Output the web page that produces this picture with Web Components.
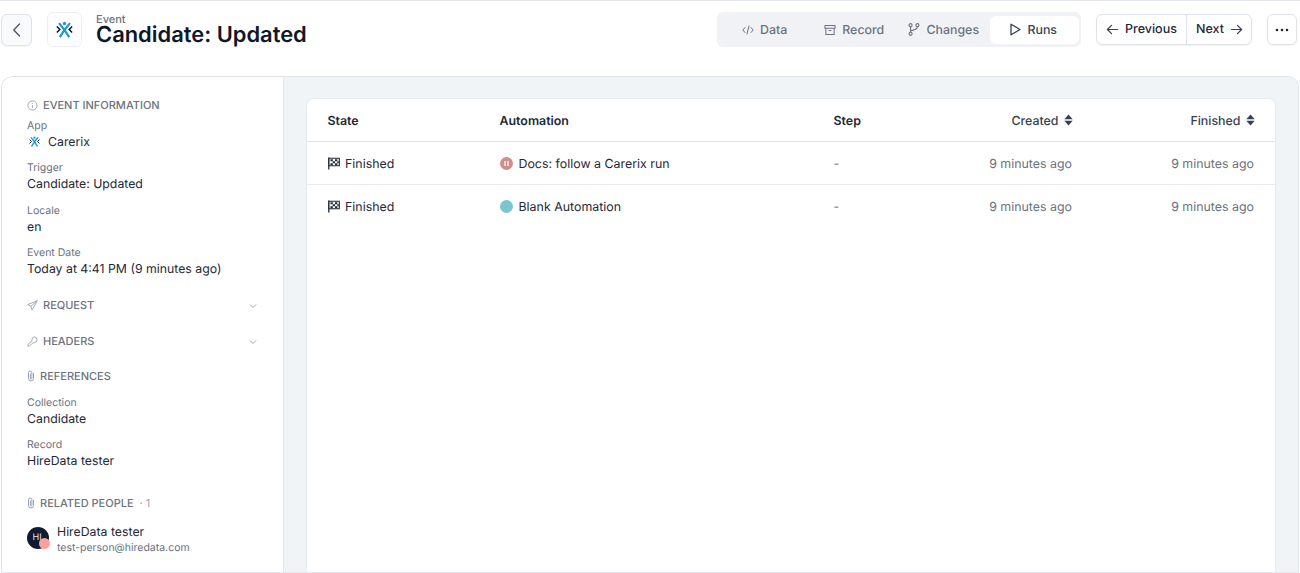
<!DOCTYPE html>
<html><head><meta charset="utf-8"><style>
html,body{margin:0;padding:0;height:573px;overflow:hidden;background:#fff;font-family:Inter,"Liberation Sans",sans-serif;color:#111827;text-rendering:geometricPrecision}
</style></head><body>
<app-page></app-page>
<script>
const I={
 back:'<svg width="16" height="16" viewBox="0 0 16 16" fill="none" stroke="#4b5563" stroke-width="1.3" stroke-linecap="round" stroke-linejoin="round"><path d="M10.500 2 4.800 8l5.700 6"/></svg>',
 logo:s=>`<svg width="${s}" height="${s}" viewBox="0 0 20 20" fill="none"><path d="M3.500 2.500 10 10.500 16.500 2.500M10 10.500 4.500 19M10 10.500 15.500 19" stroke="#1a9ad6" stroke-width="2.600"/><circle cx="10" cy="3" r="2" fill="#1a9ad6"/><path d="M1 6.500 4.500 10 1 13.500M19 6.500 15.500 10 19 13.500" stroke="#111827" stroke-width="1.800"/></svg>`,
 code:'<svg width="12" height="12" viewBox="0 0 12 12" fill="none" stroke="#6b7280" stroke-width="1" stroke-linecap="round" stroke-linejoin="round"><path d="M3 3.500.8 6 3 8.500M9 3.500 11.200 6 9 8.500M7 2 5 10"/></svg>',
 box:'<svg width="12" height="12" viewBox="0 0 13 13" fill="none" stroke="#6b7280" stroke-width="1.100" stroke-linejoin="round"><rect x="1" y="1.500" width="11" height="3"/><path d="M2 4.500v7h9v-7M5 7h3"/></svg>',
 branch:'<svg width="12" height="15" viewBox="0 0 14 16" fill="none" stroke="#6b7280" stroke-width="1.300"><circle cx="3" cy="3" r="1.800"/><circle cx="3" cy="13" r="1.800"/><circle cx="11" cy="3" r="1.800"/><path d="M3 4.800v6.400M11 4.800c0 3-3 3.800-8 4.800"/></svg>',
 play:'<svg width="12" height="13" viewBox="0 0 12 13" fill="none" stroke="#374151" stroke-width="1.300" stroke-linejoin="round"><path d="M2 1.200 11 6.500 2 11.800z"/></svg>',
 left:'<svg width="13" height="13" viewBox="0 0 14 14" fill="none" stroke="#374151" stroke-width="1.300" stroke-linecap="round" stroke-linejoin="round"><path d="M12.500 7h-11M6 2.500 1.500 7 6 11.500"/></svg>',
 right:'<svg width="13" height="13" viewBox="0 0 14 14" fill="none" stroke="#374151" stroke-width="1.300" stroke-linecap="round" stroke-linejoin="round"><path d="M1.500 7h11M8 2.500 12.500 7 8 11.500"/></svg>',
 dots:'<svg width="14" height="4" viewBox="0 0 14 4" fill="#1f2937"><circle cx="2" cy="2" r="1.300"/><circle cx="7" cy="2" r="1.300"/><circle cx="12" cy="2" r="1.300"/></svg>',
 info:'<svg width="11" height="11" viewBox="0 0 12 12" fill="none" stroke="#9ca3af" stroke-width="1"><circle cx="6" cy="6" r="5"/><path d="M6 5.500v3M6 3.300v.8"/></svg>',
 send:'<svg width="11" height="11" viewBox="0 0 12 12" fill="none" stroke="#9ca3af" stroke-width="1" stroke-linejoin="round"><path d="M11.200 .8.800 5l3.400 1.800L5.500 11z"/><path d="M11.200 .8 4.200 6.800"/></svg>',
 key:'<svg width="11" height="11" viewBox="0 0 12 12" fill="none" stroke="#9ca3af" stroke-width="1" stroke-linejoin="round"><path d="M7.800 1a3.200 3.200 0 0 1 0 6.400l-1-.1L2.500 11H1V9.500l4.500-4.300-.1-1A3 3 0 0 1 7.800 1z"/></svg>',
 clip:'<svg width="8" height="12" viewBox="0 0 8 12" fill="none" stroke="#9ca3af" stroke-width="1"><path d="M6.500 3v5.500a2.500 2.500 0 0 1-5 0V2.700a1.700 1.700 0 0 1 3.400 0v5.600a.8.800 0 0 1-1.600 0V3.500"/></svg>',
 chev:'<svg width="8" height="6" viewBox="0 0 8 6" fill="none" stroke="#9ca3af" stroke-width="1" style="margin-top:2px"><path d="M1 1.500 4 4.500 7 1.500"/></svg>',
 flag:'<svg width="12" height="13" viewBox="0 0 12 13" fill="none"><path d="M.8 .5v12" stroke="#1f2937" stroke-width="1.300"/><path d="M1 1.200h10.300v7.600H1z" stroke="#1f2937" stroke-width="1.100" fill="#fff"/><path d="M2.500 2.300h2.300v2H2.500zM7 2.300h2.300v2H7zM4.800 4.300H7v2H4.800zM9.300 4.300h1.500v2H9.300zM2.500 6.300h2.300v2H2.500zM7 6.300h2.300v2H7z" fill="#1f2937"/></svg>',
 sort:'<svg width="9" height="12" viewBox="0 0 9 12" fill="#374151"><path d="M4.500 .5 8.700 5.200H.3zM4.500 11.500 .3 6.800h8.400z"/></svg>',
 pause:'<svg width="13" height="13" viewBox="0 0 13 13"><circle cx="6.500" cy="6.500" r="6.500" fill="#cf8f8c"/><rect x="4.300" y="4" width="1.500" height="5" fill="#fff" opacity=".85"/><rect x="7.200" y="4" width="1.500" height="5" fill="#fff" opacity=".85"/></svg>',
 dot:'<svg width="13" height="13" viewBox="0 0 13 13"><circle cx="6.500" cy="6.500" r="6.500" fill="#7cc5cf"/></svg>'
};
function def(n,css,html){
 customElements.define(n,class extends HTMLElement{
  connectedCallback(){ if(this.shadowRoot)return;
   const r=this.attachShadow({mode:'open'});
   r.innerHTML='<style>'+css+'</style>'+(typeof html==='function'?html(this):html);
  }
 });
}
def('seg-tab',`:host{display:flex;align-items:center;justify-content:center;gap:6px;height:28px;font-size:12.400px;font-weight:500;color:#6b7280;box-sizing:border-box;padding-right:2px}
:host([active]){background:#fff;border-radius:6px;color:#374151}`,e=>`${I[e.getAttribute('icon')]}<slot></slot>`);
def('nav-btn',`:host{display:flex;align-items:center;justify-content:center;gap:6px;height:100%;box-sizing:border-box;font-size:12.500px;font-weight:500;color:#1f2937}`,e=>{const ic=I[e.getAttribute('icon')];return e.hasAttribute('after')?`<slot></slot>${ic}`:`${ic}<slot></slot>`});
def('top-bar',`:host{display:flex;align-items:center;height:76px;box-sizing:border-box;border-top:1px solid #e5e7eb;padding:0 3px 18px 1px}
.back{width:31px;height:32px;box-sizing:border-box;border:1px solid #dfe2e8;border-radius:6px;background:#f8fafc;display:flex;align-items:center;justify-content:center;margin-right:15px;box-shadow:0 1px 1px rgba(0,0,0,.04)}
.logo{width:35px;height:35px;box-sizing:border-box;border:1px solid #eceef2;border-radius:6px;display:flex;align-items:center;justify-content:center;margin-right:14px}
.tt{display:flex;flex-direction:column;flex:1}
.ev{font-size:11px;line-height:11px;color:#6b7280;font-weight:500}
h1{margin:0;font-size:21.900px;line-height:21px;font-weight:600;color:#0f172a}
.seg{display:grid;grid-template-columns:repeat(4,89.500px);align-items:center;width:364px;height:35px;box-sizing:border-box;background:#f1f2f5;border-radius:6px;padding:0 2px 0 4px;margin-right:15px}
.seg2{display:grid;grid-template-columns:89px 66px;width:156px;height:31px;box-sizing:border-box;border:1px solid #dfe2e8;border-radius:6px;box-shadow:0 1px 1px rgba(0,0,0,.05);margin-right:15px}
.seg2 nav-btn+nav-btn{border-left:1px solid #dfe2e8}
.more{width:30px;height:31px;box-sizing:border-box;border:1px solid #dfe2e8;border-radius:6px;display:flex;align-items:center;justify-content:center;box-shadow:0 1px 1px rgba(0,0,0,.05)}`,
`<div class="back">${I.back}</div><div class="logo">${I.logo(17)}</div>
<div class="tt"><div class="ev">Event</div><h1>Candidate: Updated</h1></div>
<div class="seg"><seg-tab icon="code">Data</seg-tab><seg-tab icon="box">Record</seg-tab><seg-tab icon="branch">Changes</seg-tab><seg-tab icon="play" active>Runs</seg-tab></div>
<div class="seg2"><nav-btn icon="left">Previous</nav-btn><nav-btn icon="right" after>Next</nav-btn></div>
<div class="more">${I.dots}</div>`);
def('sec-head',`:host{display:flex;align-items:center;gap:5px;height:14px;font-size:11px;font-weight:500;color:#6b7280}
.s{flex:1}`,e=>`${I[e.getAttribute('icon')]}<slot></slot>${e.hasAttribute('chev')?`<span class="s"></span>${I.chev}`:''}`);
def('field-item',`:host{display:block;height:42.300px}
.l{font-size:10.500px;line-height:13px;margin-bottom:1px;color:#6b7280}
.v{display:flex;align-items:center;gap:8px;font-size:12.300px;line-height:17px;color:#1f2937}
.lg{display:flex;margin-left:2px}`,e=>`<div class="l">${e.getAttribute('label')}</div><div class="v">${e.hasAttribute('logo')?`<span class="lg">${I.logo(11)}</span>`:''}<slot></slot></div>`);
def('side-bar',`:host{display:flex;flex-direction:column;width:282px;flex:none;box-sizing:border-box;padding:21px 26px 0 25px;background:#fff;border-right:1px solid #e5e7eb}
.f{margin-top:7px}
.person{display:flex;align-items:flex-start;gap:8px;margin-top:13px}
.av{position:relative;width:22px;height:22px;margin-top:4px;border-radius:50%;background:#111a33;color:#e5e7eb;font-size:9px;display:flex;align-items:center;justify-content:center;flex:none;box-sizing:border-box;padding-right:2px}
.av i{position:absolute;right:-1px;bottom:0;width:11px;height:11px;border-radius:50%;background:#f9a1a1}
.n{font-size:12.300px;line-height:16px;padding-top:1px;color:#1f2937}
.m{font-size:10.500px;line-height:15px;color:#6b7280}
.c{color:#9ca3af;font-weight:400;margin-left:1px}`,
`<sec-head icon="info">EVENT INFORMATION</sec-head>
<div class="f"><field-item label="App" logo>Carerix</field-item><field-item label="Trigger">Candidate: Updated</field-item><field-item label="Locale">en</field-item><field-item label="Event Date">Today at 4:41 PM (9 minutes ago)</field-item></div>
<sec-head icon="send" chev style="margin-top:10px">REQUEST</sec-head>
<sec-head icon="key" chev style="margin-top:22px">HEADERS</sec-head>
<sec-head icon="clip" style="margin-top:21px">REFERENCES</sec-head>
<div class="f" style="margin-top:13px"><field-item label="Collection">Candidate</field-item><field-item label="Record">HireData tester</field-item></div>
<sec-head icon="clip" style="margin-top:15px"><span>RELATED PEOPLE</span> <span class="c">· 1</span></sec-head>
<div class="person"><div class="av">HI<i></i></div><div><div class="n">HireData tester</div><div class="m">test-person@hiredata.com</div></div></div>`);
def('run-row',`:host{display:grid;grid-template-columns:172px 334px 1fr 180px 182px;align-items:center;height:43px;box-sizing:border-box;padding:0 21px 0 20.500px;border-bottom:1px solid #e9ebef;font-size:12.400px;color:#1f2937}
:host(:last-of-type){border-bottom:1px solid transparent}
.ic{display:flex;align-items:center;gap:6px}
.ic.s1{gap:5.500px}
.r{text-align:right;color:#6b7280}.d{color:#6b7280}`,
e=>`<div class="ic s1">${I.flag}<span>Finished</span></div><div class="ic">${I[e.getAttribute('dot')]}<slot></slot></div><div class="d">-</div><div class="r">9 minutes ago</div><div class="r">9 minutes ago</div>`);
def('run-table',`:host{display:block;flex:1;background:#fff;border:1px solid #e8ebef;border-bottom:none;border-radius:8px 8px 0 0;box-sizing:border-box}
.h{display:grid;grid-template-columns:172px 334px 1fr 180px 182px;align-items:center;height:43px;box-sizing:border-box;padding:0 20.500px;border-bottom:1px solid #dfe2e8;font-size:12.400px;font-weight:600;color:#1f2937}
.s{display:flex;justify-content:flex-end;align-items:center;gap:5px;font-weight:500;color:#374151}`,
`<div class="h"><div>State</div><div>Automation</div><div>Step</div><div class="s">Created ${I.sort}</div><div class="s">Finished ${I.sort}</div></div>
<run-row dot="pause">Docs: follow a Carerix run</run-row><run-row dot="dot">Blank Automation</run-row>`);
def('app-page',`:host{display:block;height:573px;overflow:hidden}
.main{display:flex;height:497px;margin:0 1px;box-sizing:border-box;border:1px solid #dfe2e8;border-bottom:1px solid #e5e7eb;border-radius:12px 12px 0 0;overflow:hidden}
.right{flex:1;background:#f1f4f7;display:flex;padding:21px 22px 0 22px}`,
`<top-bar></top-bar><div class="main"><side-bar></side-bar><div class="right"><run-table></run-table></div></div>`);
</script>
</body></html>
